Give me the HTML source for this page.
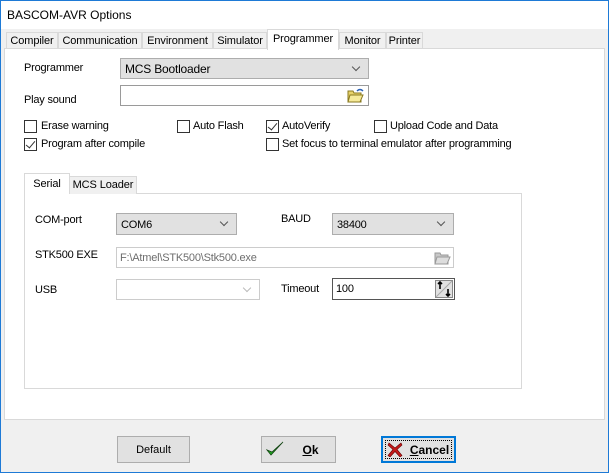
<!DOCTYPE html>
<html><head><meta charset="utf-8"><style>
*{box-sizing:border-box;margin:0;padding:0}
body{width:609px;height:473px;overflow:hidden;font-family:"Liberation Sans",sans-serif;font-size:11px;color:#000;background:#fff}
.win{position:absolute;left:0;top:0;width:609px;height:473px;border:1px solid #1e7ad6;background:#f0f0f0}
.title{position:absolute;left:0;top:0;width:607px;height:28px;background:#fff;font-size:12px;padding:7px 0 0 6px}
.a{position:absolute}
.tab{position:absolute;top:31px;height:17px;border:1px solid #d9d9d9;border-bottom:none;background:#f0f0f0;padding:2px 0 0 0;text-align:center;font-size:11px;letter-spacing:-0.1px}
.panel{position:absolute;left:3px;top:47px;width:601px;height:372px;background:#fff;border:1px solid #d9d9d9}
.cb{position:absolute;width:13px;height:13px;border:1px solid #333;background:#fff}
.cb.on::after{content:"";position:absolute;left:3px;top:0px;width:4px;height:8px;border-right:1.3px solid #333;border-bottom:1.3px solid #333;transform:rotate(40deg)}
.lbl{position:absolute;font-size:11px;white-space:nowrap;letter-spacing:-0.2px}
.combo{position:absolute;border:1px solid #adadad;background:#e1e1e1;padding:3px 0 0 4px;font-size:11px;letter-spacing:-0.2px}
.combo::after{content:"";position:absolute;right:9px;top:5px;width:5px;height:5px;border-right:1px solid #555;border-bottom:1px solid #555;transform:rotate(45deg)}
.combo.dis{background:#fff;border-color:#ccc}
.combo.dis::after{border-color:#bbb}
.edit{position:absolute;border:1px solid #7a7a7a;background:#fff;padding:2px 0 0 3px;letter-spacing:-0.2px}
.btn{position:absolute;top:435px;height:27px;border:1px solid #adadad;background:#e1e1e1;font-size:11px;text-align:center}
</style></head><body>
<div class="win">
<div class="title">BASCOM-AVR Options</div>
<div class="tab" style="left:5px;width:52px">Compiler</div>
<div class="tab" style="left:57px;width:84px">Communication</div>
<div class="tab" style="left:141px;width:71px">Environment</div>
<div class="tab" style="left:212px;width:54px">Simulator</div>
<div class="tab" style="left:338px;width:47px">Monitor</div>
<div class="tab" style="left:385px;width:37px">Printer</div>
<div class="panel"></div>
<div class="tab" style="left:266px;top:28px;width:72px;height:21px;background:#fff;padding-top:3px;z-index:2">Programmer</div>

<div class="lbl" style="left:23px;top:61px">Programmer</div>
<div class="combo" style="left:119px;top:57px;width:249px;height:21px;font-size:12px">MCS Bootloader</div>
<div class="lbl" style="left:23px;top:93px">Play sound</div>
<div class="edit" style="left:119px;top:84px;width:249px;height:21px;border-color:#9a9a9a"></div>
<svg class="a" style="left:345px;top:86px" width="19" height="17" viewBox="0 0 19 17"><path d="M2 4h5l1 2h7v9H2z" fill="#e8d26a" stroke="#8a7a20" stroke-width="1"/><path d="M4 8h13l-3 7H2z" fill="#f6ea9a" stroke="#8a7a20" stroke-width="1"/><path d="M11 4q3-3 6 0" fill="none" stroke="#2a62b8" stroke-width="1.5"/></svg>

<div class="cb" style="left:23px;top:119px"></div><div class="lbl" style="left:40px;top:119px">Erase warning</div>
<div class="cb" style="left:176px;top:119px"></div><div class="lbl" style="left:192px;top:119px">Auto Flash</div>
<div class="cb on" style="left:265px;top:119px"></div><div class="lbl" style="left:281px;top:119px">AutoVerify</div>
<div class="cb" style="left:373px;top:119px"></div><div class="lbl" style="left:389px;top:119px">Upload Code and Data</div>
<div class="cb on" style="left:23px;top:137px"></div><div class="lbl" style="left:40px;top:137px">Program after compile</div>
<div class="cb" style="left:265px;top:137px"></div><div class="lbl" style="left:281px;top:137px">Set focus to terminal emulator after programming</div>

<div class="a" style="left:23px;top:192px;width:498px;height:196px;border:1px solid #d9d9d9;background:#fff"></div>
<div class="tab" style="left:68px;top:175px;width:68px;height:18px;padding-top:2px">MCS Loader</div>
<div class="tab" style="left:23px;top:172px;width:46px;height:21px;background:#fff;padding-top:4px;z-index:2">Serial</div>

<div class="lbl" style="left:34px;top:213px">COM-port</div>
<div class="combo" style="left:115px;top:212px;width:121px;height:22px;padding-top:5px">COM6</div>
<div class="lbl" style="left:280px;top:212px">BAUD</div>
<div class="combo" style="left:331px;top:212px;width:122px;height:22px;padding-top:5px">38400</div>
<div class="lbl" style="left:34px;top:248px">STK500 EXE</div>
<div class="edit" style="left:115px;top:246px;width:338px;height:21px;border-color:#ccc;color:#6d6d6d;padding-top:4px">F:\Atmel\STK500\Stk500.exe</div>
<svg class="a" style="left:432px;top:248px" width="19" height="17" viewBox="0 0 19 17"><path d="M2 4h5l1 2h7v9H2z" fill="#c8c8c8" stroke="#999"/><path d="M4 8h13l-3 7H2z" fill="#ddd" stroke="#999"/></svg>
<div class="lbl" style="left:34px;top:283px">USB</div>
<div class="combo dis" style="left:115px;top:278px;width:144px;height:21px"></div>
<div class="lbl" style="left:280px;top:282px">Timeout</div>
<div class="edit" style="left:331px;top:277px;width:123px;height:22px;border-color:#555;padding-top:4px">100</div>
<svg class="a" style="left:434px;top:279px" width="18" height="18" viewBox="0 0 18 18"><rect x="0.5" y="0.5" width="17" height="17" fill="#e1e1e1" stroke="#888"/><path d="M1 17L17 1" stroke="#aaa"/><path d="M5 9V2M3 4l2-2 2 2M13 9v7M11 14l2 2 2-2" stroke="#000" stroke-width="1.6" fill="none"/></svg>

<div class="btn" style="left:116px;width:73px;padding-top:7px">Default</div>
<div class="btn" style="left:260px;width:75px;padding-top:6px;font-weight:bold;font-size:12px"><u style="margin-left:24px">O</u>k</div>
<svg class="a" style="left:265px;top:440px" width="18" height="16" viewBox="0 0 18 16"><path d="M1 9l4 5L17 1l-11 10z" fill="#22aa22" stroke="#114411" stroke-width="0.8"/></svg>
<div class="btn" style="left:380px;width:75px;border:2px solid #0078d7;padding-top:5px;font-weight:bold;font-size:12px"><div style="position:absolute;left:2px;top:2px;right:2px;bottom:2px;border:1px dotted #000"></div><span style="margin-left:22px"><u>C</u>ancel</span></div>
<svg class="a" style="left:386px;top:441px" width="16" height="15" viewBox="0 0 16 15"><path d="M2 1l6 5 6-5 1 2-5 4.5 5 6-2 1.5-5-5.5-5 5.5-2-1.5 5-6-5-4.5z" fill="#c41a1a" stroke="#600" stroke-width="0.6"/></svg>
</div>
</body></html>
